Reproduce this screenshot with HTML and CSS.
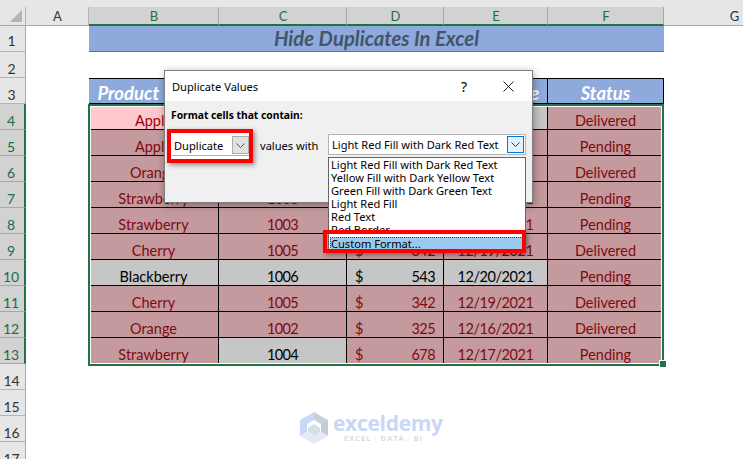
FILE: index.html
```html
<!DOCTYPE html>
<html lang="en">
<head>
<meta charset="utf-8">
<title>Duplicate Values</title>
<link rel="stylesheet" href="styles.css">
</head>
<body>
<div class="app">
  <div class="topbar"></div>
  <div class="sheet">
    <div class="corner"><svg class="corner-tri" width="12" height="12" viewBox="0 0 12 12"><path d="M12 0V12H0Z" fill="#b4b4b4"/></svg></div>
    <div class="ch">A</div><div class="ch sel">B</div><div class="ch sel">C</div><div class="ch sel">D</div><div class="ch sel">E</div><div class="ch sel">F</div><div class="ch last">G</div>

    <div class="rh rh-first">1</div><div class="blank"></div><div class="title">Hide Duplicates In Excel</div><div class="blank"></div>
    <div class="rh">2</div><div class="blank wide"></div><div class="blank"></div>
    <div class="rh">3</div><div class="blank"></div><div class="th">Product Name</div><div class="th">Order ID</div><div class="th">Sales</div><div class="th">Order Date</div><div class="th">Status</div><div class="blank"></div>

    <div class="rh sel">4</div><div class="blank"></div><div class="td pink">Apple</div><div class="td grey num">1001</div><div class="td grey money num"><span>$</span><span>450</span></div><div class="td grey date">12/15/2021</div><div class="td rose">Delivered</div><div class="blank"></div>
    <div class="rh sel">5</div><div class="blank"></div><div class="td rose">Apple</div><div class="td rose num">1001</div><div class="td rose money num"><span>$</span><span>450</span></div><div class="td rose date">12/15/2021</div><div class="td rose">Pending</div><div class="blank"></div>
    <div class="rh sel">6</div><div class="blank"></div><div class="td rose">Orange</div><div class="td rose num">1002</div><div class="td rose money num"><span>$</span><span>325</span></div><div class="td rose date">12/16/2021</div><div class="td rose">Delivered</div><div class="blank"></div>
    <div class="rh sel">7</div><div class="blank"></div><div class="td rose">Strawberry</div><div class="td rose num">1003</div><div class="td rose money num"><span>$</span><span>678</span></div><div class="td rose date">12/17/2021</div><div class="td rose">Pending</div><div class="blank"></div>
    <div class="rh sel">8</div><div class="blank"></div><div class="td rose">Strawberry</div><div class="td rose num">1003</div><div class="td rose money num"><span>$</span><span>678</span></div><div class="td rose date">12/17/2021</div><div class="td rose">Pending</div><div class="blank"></div>
    <div class="rh sel">9</div><div class="blank"></div><div class="td rose">Cherry</div><div class="td rose num">1005</div><div class="td rose money num"><span>$</span><span>342</span></div><div class="td rose date">12/19/2021</div><div class="td rose">Delivered</div><div class="blank"></div>
    <div class="rh sel">10</div><div class="blank"></div><div class="td grey">Blackberry</div><div class="td grey num">1006</div><div class="td grey money num"><span>$</span><span>543</span></div><div class="td grey date">12/20/2021</div><div class="td rose">Pending</div><div class="blank"></div>
    <div class="rh sel">11</div><div class="blank"></div><div class="td rose">Cherry</div><div class="td rose num">1005</div><div class="td rose money num"><span>$</span><span>342</span></div><div class="td rose date">12/19/2021</div><div class="td rose">Delivered</div><div class="blank"></div>
    <div class="rh sel">12</div><div class="blank"></div><div class="td rose">Orange</div><div class="td rose num">1002</div><div class="td rose money num"><span>$</span><span>325</span></div><div class="td rose date">12/16/2021</div><div class="td rose">Delivered</div><div class="blank"></div>
    <div class="rh sel">13</div><div class="blank"></div><div class="td rose">Strawberry</div><div class="td grey num">1004</div><div class="td rose money num"><span>$</span><span>678</span></div><div class="td rose date">12/17/2021</div><div class="td rose">Pending</div><div class="blank"></div>
    <div class="rh">14</div><div class="blank wide"></div><div class="blank"></div>
    <div class="rh">15</div><div class="blank wide"></div><div class="blank"></div>
    <div class="rh">16</div><div class="blank wide"></div><div class="blank"></div>
    <div class="rh">17</div><div class="blank wide"></div><div class="blank"></div>
  </div>

  <div class="selection"><span class="handle"></span></div>

  <div class="logo">
    <svg class="logo-mark" width="28" height="32" viewBox="0 0 28 32">
      <path d="M14 0L28 8V16L14 8Z" fill="#c9d0dc"/>
      <path d="M28 8V24L21 20V12Z" fill="#c6ccd6"/>
      <path d="M14 0L0 8V24L7 20V12L14 8Z" fill="#c8d8f8"/>
      <path d="M0 24L14 32L28 24L21 20L14 24L7 20Z" fill="#e3ebf5"/>
      <path d="M14 12L20 16V20L14 24L8 20V16Z" fill="#d6dde8"/>
    </svg>
    <div class="logo-text">
      <div class="logo-name">exceldemy</div>
      <div class="logo-tag">EXCEL · DATA · BI</div>
    </div>
  </div>

  <div class="dialog">
    <div class="dlg-title">
      <span class="dlg-name">Duplicate Values</span>
      <span class="dlg-help">?</span>
      <svg class="dlg-close" width="11" height="11" viewBox="0 0 11 11"><path d="M0.5 0.5L10.5 10.5M10.5 0.5L0.5 10.5" stroke="#222" stroke-width="1" fill="none"/></svg>
    </div>
    <div class="dlg-body">
      <div class="dlg-label">Format cells that contain:</div>
      <div class="dlg-row">
        <div class="redbox">
          <div class="combo combo-small">
            <span class="combo-text">Duplicate</span>
            <span class="caret caret-grey"><svg width="9" height="5" viewBox="0 0 9 5"><path d="M0.5 0.5L4.5 4.5L8.5 0.5" stroke="#555" fill="none"/></svg></span>
          </div>
        </div>
        <span class="values-with">values with</span>
        <div class="combo combo-large">
          <span class="combo-text">Light Red Fill with Dark Red Text</span>
          <span class="caret caret-blue"><svg width="9" height="5" viewBox="0 0 9 5"><path d="M0.5 0.5L4.5 4.5L8.5 0.5" stroke="#333" fill="none"/></svg></span>
        </div>
      </div>
    </div>
    <div class="list">
      <div class="item">Light Red Fill with Dark Red Text</div>
      <div class="item">Yellow Fill with Dark Yellow Text</div>
      <div class="item">Green Fill with Dark Green Text</div>
      <div class="item">Light Red Fill</div>
      <div class="item">Red Text</div>
      <div class="item">Red Border</div>
      <div class="item current">Custom Format...</div>
      <div class="list-red"></div>
    </div>
  </div>
</div>
</body>
</html>
```
FILE: styles.css
```css
* { box-sizing: border-box; }
html, body { margin: 0; padding: 0; background: #fff; }
body { width: 743px; height: 459px; overflow: hidden; }
.app { position: relative; width: 743px; height: 459px; overflow: hidden; font-family: "Lato", "Liberation Sans", sans-serif; }
.topbar { height: 7px; background: #e6e6e6; }

.sheet {
  display: grid;
  grid-template-columns: 26px 63px 130px 128px 97px 104px 116px 140px;
  grid-template-rows: 19px repeat(17, 26px);
}
.corner { background: #e6e6e6; border-right: 1px solid #b4b4b4; border-bottom: 1px solid #a8a8a8; display: flex; align-items: flex-end; justify-content: flex-end; padding: 0 3px 3px 0; }
.ch { background: #e6e6e6; border-right: 1px solid #b4b4b4; border-bottom: 1px solid #a8a8a8; display: flex; align-items: center; justify-content: center; font-size: 13px; color: #333; padding-left: 1px; }
.ch.sel { background: #d2d2d2; color: #1f6b45; border-right-color: #a8a8a8; border-bottom: 2px solid #217346; }
.ch.last { border-right: 0; }
.rh { background: #e6e6e6; border-right: 1px solid #a8a8a8; border-bottom: 1px solid #b4b4b4; display: flex; align-items: flex-end; justify-content: center; font-size: 14px; line-height: 16px; color: #333; padding-right: 2px; }
.rh-first { line-height: 21px; }
.rh.sel { background: #d2d2d2; color: #1f6b45; border-right: 2px solid #217346; border-bottom-color: #a8a8a8; }
.blank { background: #fff; }
.blank.wide { grid-column: 2 / span 6; }
.title { grid-column: 3 / span 5; background: #8ea9db; border-bottom: 3px solid #4472c4; color: #44546a; font-weight: 700; font-style: italic; font-size: 20.3px; text-align: center; line-height: 25px; height: 28px; }
.th { background: #8ea9db; border: solid #000; border-width: 1px 1px 1px 0; color: #fff; font-weight: 700; font-style: italic; font-size: 18.5px; display: flex; align-items: flex-end; justify-content: center; line-height: 20px; white-space: nowrap; }
.td { border-right: 1px solid #000; border-bottom: 1px solid #000; font-size: 14.5px; display: flex; align-items: flex-end; justify-content: center; line-height: 16px; color: #000; }
.num { letter-spacing: -0.6px; }
.date { letter-spacing: -0.45px; }
.pink { background: #ffc7ce; color: #9c0006; }
.rose { background: #c49a9e; color: #7f0a10; }
.grey { background: #c6c6c6; color: #000; }
.money { justify-content: space-between; padding-left: 8px; padding-right: 8px; }

.selection { position: absolute; left: 88px; top: 104px; width: 576px; height: 262px; border: 2px solid #217346; box-shadow: inset 0 0 0 1px #fff; pointer-events: none; }
.handle { position: absolute; right: -4px; bottom: -3px; width: 6px; height: 6px; background: #217346; border: 0; box-shadow: 0 0 0 1px #fff; }

.logo { position: absolute; left: 300px; top: 412px; display: flex; align-items: flex-start; gap: 5px; }
.logo-name { font-family: "Open Sans", sans-serif; font-weight: 700; font-size: 21px; line-height: 22px; color: #c9d7f7; letter-spacing: -0.3px; }
.logo-tag { font-family: "Open Sans", sans-serif; font-weight: 700; font-size: 7.5px; line-height: 9px; color: #d9dde3; letter-spacing: 1px; margin-left: 11px; }

.dialog { position: absolute; left: 164px; top: 70px; width: 369px; height: 133px; background: #f0f0f0; border: 1px solid #7f7f7f; box-shadow: 1px 2px 8px rgba(0,0,0,.35); font-family: "Noto Sans", sans-serif; font-size: 11.1px; color: #000; }
.dlg-title { height: 30px; background: #fff; display: flex; align-items: center; padding-left: 7px; }
.dlg-name { font-size: 11.1px; flex: 1; }
.dlg-help { font-size: 14px; width: 14px; margin-right: 32px; text-align: center; }
.dlg-close { margin-right: 18px; }
.dlg-body { padding: 6px 0 0 2px; }
.dlg-label { font-weight: 700; font-size: 10.3px; line-height: 16px; padding-left: 4px; }
.dlg-row { display: flex; align-items: flex-start; margin-top: 6px; }
.redbox { width: 86px; height: 34px; border: 4px solid #f00; background: #fff; box-shadow: 2px 2px 5px rgba(0,0,0,.4); padding: 1px 0 0 1px; }
.combo { display: flex; align-items: center; background: #fff; }
.combo-small { height: 22px; border-bottom: 1px solid #b0b0b0; width: 77px; padding-top: 1px; }
.combo-large { width: 198px; height: 21px; border: 1px solid #b4b4b4; margin-top: 5px; }
.combo-text { flex: 1; padding-left: 2px; white-space: nowrap; }
.combo-large .combo-text { padding-left: 3px; }
.caret { display: flex; align-items: center; justify-content: center; }
.caret-grey { width: 17px; height: 18px; background: #e1e1e1; border: 1px solid #adadad; }
.caret-blue { width: 17px; height: 17px; background: #e5f1fb; border: 1px solid #0078d7; margin-right: 1px; }
.values-with { margin-left: 7px; margin-top: 9px; width: 68px; line-height: 16px; white-space: nowrap; }

.list { position: absolute; left: 163px; top: 86px; width: 198px; height: 95px; background: #fff; border: 1px solid #646464; border-bottom: 0; padding: 0 0 0 2px; line-height: 13px; }
.item { height: 13px; white-space: nowrap; }
.item.current { background: #99c9ef; outline: 1px dotted #444; outline-offset: -1px; margin: 1px 2px 0 -1px; padding-left: 1px; }
.list-red { position: absolute; left: -6px; top: 72px; width: 203px; height: 23px; border: 4px solid #f00; box-shadow: 2px 2px 4px rgba(0,0,0,.35); pointer-events: none; }
```
